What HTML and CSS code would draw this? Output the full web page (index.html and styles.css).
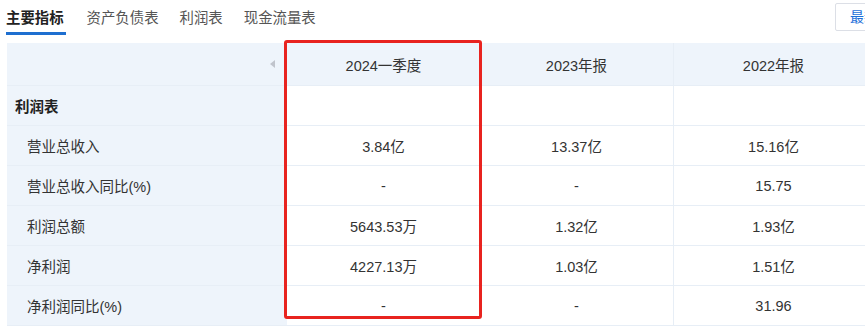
FILE: index.html
```html
<!DOCTYPE html>
<html lang="zh-CN">
<head>
<meta charset="utf-8">
<link rel="stylesheet" href="styles.css">
</head>
<body>
<div class="page">
  <div class="tabbar">
    <div class="tabs">
      <div class="tab active">主要指标</div>
      <div class="tab">资产负债表</div>
      <div class="tab">利润表</div>
      <div class="tab">现金流量表</div>
    </div>
    <div class="btn">最新报告</div>
  </div>
  <div class="table">
    <div class="grid">
      <div class="cell head first"><span class="arrow"></span></div>
      <div class="cell head">2024一季度</div>
      <div class="cell head">2023年报</div>
      <div class="cell head sep">2022年报</div>

      <div class="cell first section">利润表</div>
      <div class="cell"></div>
      <div class="cell"></div>
      <div class="cell sep"></div>

      <div class="cell first label">营业总收入</div>
      <div class="cell">3.84亿</div>
      <div class="cell">13.37亿</div>
      <div class="cell sep">15.16亿</div>

      <div class="cell first label">营业总收入同比(%)</div>
      <div class="cell">-</div>
      <div class="cell">-</div>
      <div class="cell sep">15.75</div>

      <div class="cell first label">利润总额</div>
      <div class="cell">5643.53万</div>
      <div class="cell">1.32亿</div>
      <div class="cell sep">1.93亿</div>

      <div class="cell first label">净利润</div>
      <div class="cell">4227.13万</div>
      <div class="cell">1.03亿</div>
      <div class="cell sep">1.51亿</div>

      <div class="cell first label">净利润同比(%)</div>
      <div class="cell">-</div>
      <div class="cell">-</div>
      <div class="cell sep">31.96</div>
    </div>
    <div class="highlight"></div>
  </div>
</div>
</body>
</html>
```

FILE: styles.css
```css
html, body {
  margin: 0;
  padding: 0;
  background: #ffffff;
  overflow: hidden;
}

body {
  font-family: "Liberation Sans", "Noto Sans CJK SC", sans-serif;
  color: #333333;
  font-size: 14.5px;
}

.page {
  width: 915px;
}

.tabbar {
  display: flex;
  justify-content: space-between;
  align-items: flex-start;
  height: 43px;
}

.tabs {
  display: flex;
  gap: 21px;
  padding-left: 6px;
}

.tab {
  padding-top: 10px;
  padding-bottom: 6px;
  line-height: 16px;
  font-size: 14.4px;
  color: #555555;
  border-bottom: 3px solid transparent;
}

.tab.active {
  color: #222222;
  font-weight: bold;
  border-bottom-color: #1e6fd0;
  padding-right: 2px;
}

.btn {
  margin-top: 3px;
  width: 64px;
  height: 26px;
  border: 1px solid #dcdfe6;
  border-radius: 2px;
  color: #1e6fd9;
  font-size: 14px;
  line-height: 26px;
  padding-left: 14px;
  box-sizing: content-box;
  white-space: nowrap;
  overflow: hidden;
}

.table {
  position: relative;
  margin-left: 7px;
}

.grid {
  display: grid;
  grid-template-columns: 280px 193px 193px 200px;
  grid-template-rows: 43px repeat(6, 40px);
}

.cell {
  display: flex;
  align-items: center;
  justify-content: center;
  border-bottom: 1px solid #e7eef6;
  background: #ffffff;
  white-space: nowrap;
}

.cell.head {
  background: #eef4fb;
}

.cell.sep {
  border-left: 1px solid #e7eef6;
}

.cell.first {
  background: #eef4fb;
  justify-content: flex-start;
}

.cell.head.first {
  justify-content: flex-end;
  padding-right: 12px;
}

.arrow {
  width: 0;
  height: 0;
  border-top: 4px solid transparent;
  border-bottom: 4px solid transparent;
  border-right: 5px solid #c0c4cc;
}

.cell.section {
  font-weight: bold;
  padding-left: 8px;
  color: #222222;
}

.cell.label {
  padding-left: 20px;
}

.highlight {
  position: absolute;
  left: 277px;
  top: -3px;
  width: 192px;
  height: 273px;
  border: 3px solid #e8231f;
  border-radius: 3px;
  pointer-events: none;
}
```
